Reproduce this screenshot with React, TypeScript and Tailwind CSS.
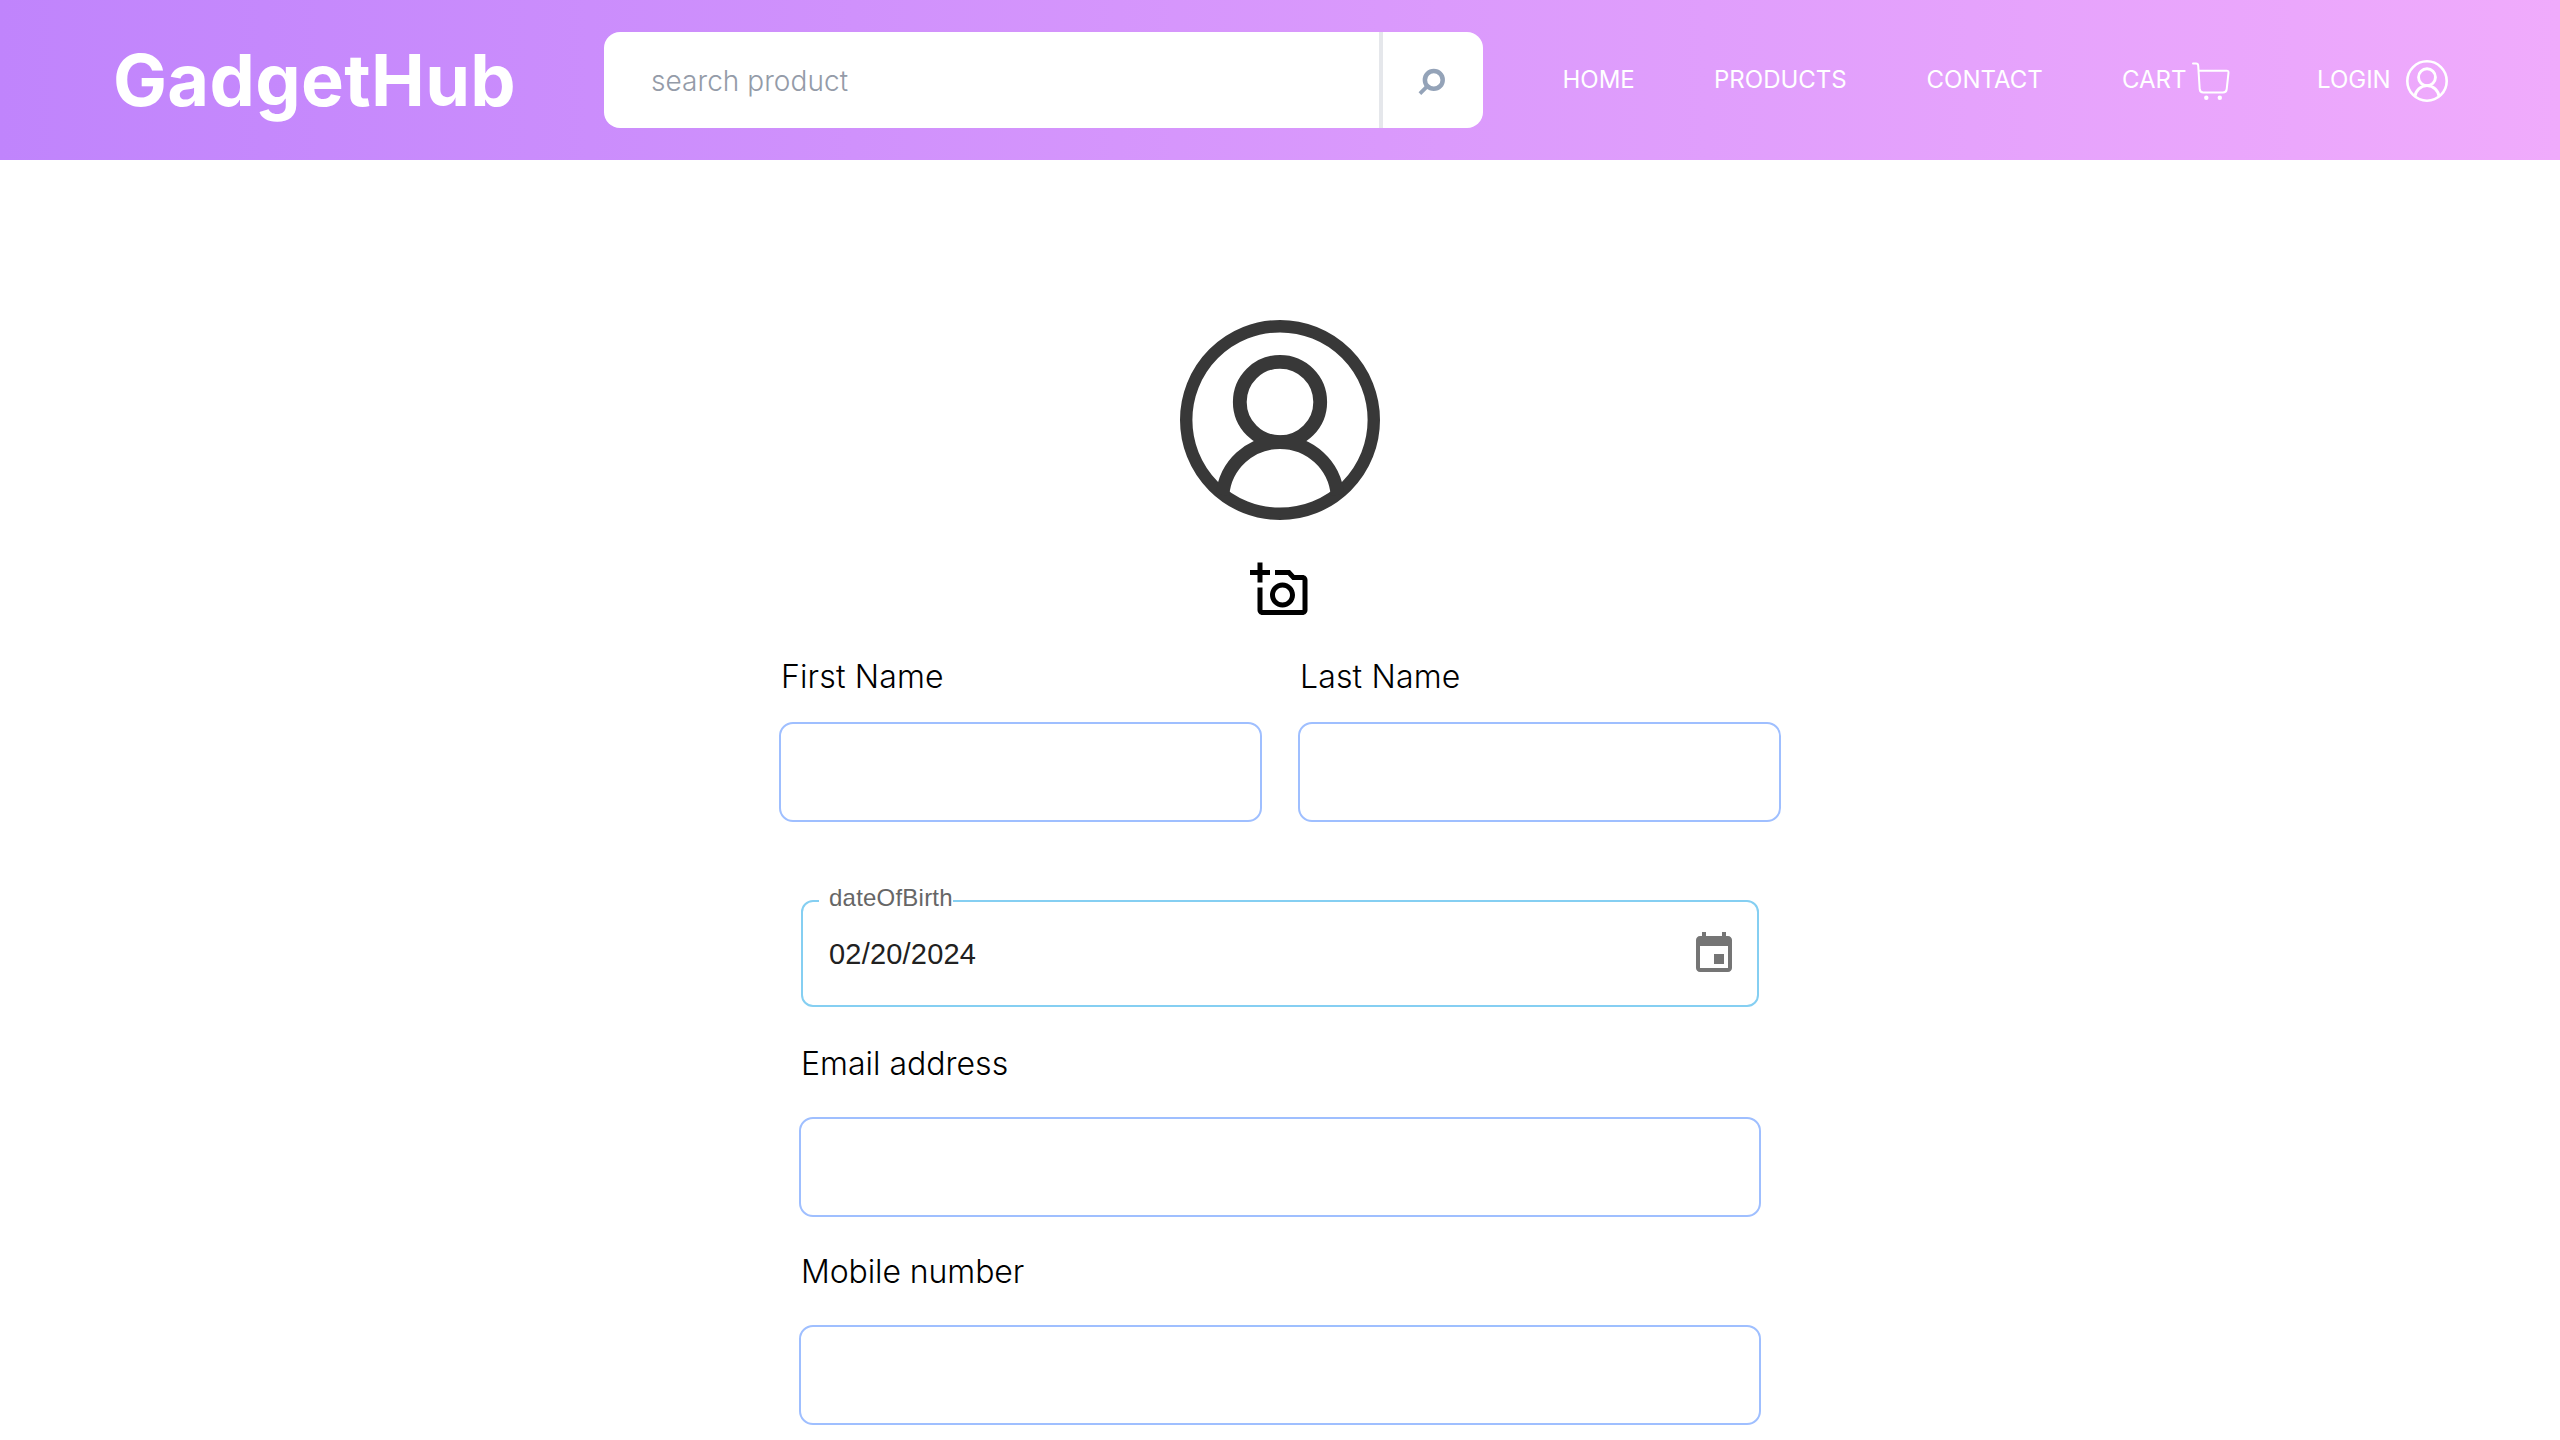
const NAV_LINK = "text-2xl leading-8 whitespace-nowrap text-white";
const FIELD = "block h-[100px] w-full rounded-[14px] border-2 border-[#9fbfff] bg-white px-6 text-3xl outline-none";
const LABEL = "block text-[32px] leading-[48px] font-light text-black whitespace-nowrap";

function SearchIcon() {
  return (
    <svg viewBox="0 0 32 32" className="size-8" fill="none" stroke="#94a3b8" strokeWidth="4.5">
      <circle cx="16.8" cy="15.9" r="8.9" />
      <path d="M10.4 22.2 L2.9 29.6" strokeWidth="3.8" />
    </svg>
  );
}

function CartIcon() {
  return (
    <svg viewBox="0 0 38 38" className="h-[38px] w-[38px]" fill="none" stroke="white" strokeWidth="2" strokeLinecap="round" strokeLinejoin="round">
      <path d="M1 1.4 H4 Q6.1 1.4 6.2 3.6 L7.7 27.2 Q8 30.6 11.3 30.6 H31 Q34.4 30.6 34.7 27.2 L36.5 10.6 Q36.6 8.7 34.7 8.7 H6.5" />
      <circle cx="14.3" cy="35.7" r="2.2" fill="white" stroke="none" />
      <circle cx="27.8" cy="35.7" r="2.2" fill="white" stroke="none" />
    </svg>
  );
}

function UserCircle({ className }: { className: string }) {
  return (
    <svg viewBox="0 0 200 200" className={className} fill="none" stroke="currentColor">
      <circle cx="100" cy="100" r="93.8" strokeWidth="12.4" />
      <circle cx="100" cy="82" r="40.2" strokeWidth="13.8" />
      <path d="M42.6 175 A57.6 57.6 0 0 1 157.4 175" strokeWidth="13.4" />
    </svg>
  );
}

function AddPhotoIcon() {
  return (
    <svg viewBox="0 0 24 24" className="size-[60px]" fill="black">
      <path d="M21 6h-3.17L16 4h-6v2h5.12l1.83 2H21v12H5v-9H3v9c0 1.1.9 2 2 2h16c1.1 0 2-.9 2-2V8c0-1.1-.9-2-2-2zM8 14c0 2.76 2.24 5 5 5s5-2.24 5-5-2.24-5-5-5-5 2.24-5 5zm5-3c1.65 0 3 1.35 3 3s-1.35 3-3 3-3-1.35-3-3 1.35-3 3-3zM5 6h3V4H5V1H3v3H0v2h3v3h2z" />
    </svg>
  );
}

function CalendarIcon() {
  return (
    <svg viewBox="0 0 24 24" className="size-12" fill="#757575">
      <path d="M17 12h-5v5h5v-5zM16 1v2H8V1H6v2H5c-1.11 0-1.99.9-1.99 2L3 19c0 1.1.89 2 2 2h14c1.1 0 2-.9 2-2V5c0-1.1-.9-2-2-2h-1V1h-2zm3 18H5V8h14v11z" />
    </svg>
  );
}

function Header() {
  return (
    <header className="flex h-40 items-center bg-linear-to-r/srgb from-[#c084fc] to-[#f0abfc] pl-28">
      <h1 className="w-[492px] pl-px text-[72px] leading-[80px] font-bold tracking-[0.32px] text-white">GadgetHub</h1>
      <div className="flex h-24 w-[879px] shrink-0 overflow-hidden rounded-2xl bg-white">
        <input
          type="text"
          placeholder="search product"
          className="min-w-0 flex-1 pt-0.5 pl-[47px] text-[28px] font-light tracking-[0.05px] outline-none placeholder:text-[#949ba8]"
        />
        <button className="flex w-[104px] items-center justify-center border-l-4 border-gray-200">
          <SearchIcon />
        </button>
      </div>
      <nav className="ml-[79.5px] flex items-center">
        <a className={`${NAV_LINK} w-[151.5px]`}>HOME</a>
        <a className={`${NAV_LINK} w-[212.5px]`}>PRODUCTS</a>
        <a className={`${NAV_LINK} w-[195.5px]`}>CONTACT</a>
        <a className={`${NAV_LINK} flex w-[195px] items-center`}>
          <span className="w-[70px]">CART</span>
          <span className="mt-0.5">
            <CartIcon />
          </span>
        </a>
        <a className={`${NAV_LINK} flex items-center`}>
          <span className="w-[89px]">LOGIN</span>
          <UserCircle className="mt-0.5 size-[42px] text-white" />
        </a>
      </nav>
    </header>
  );
}

export default function App() {
  return (
    <div className="h-[1440px] w-[2560px] overflow-hidden bg-white font-['Inter',sans-serif]">
      <Header />
      <main className="flex flex-col items-center pt-40">
        <UserCircle className="size-[200px] text-[#383838]" />
        <div className="mt-10">
          <AddPhotoIcon />
        </div>
        <form className="flex w-[1002px] flex-col items-center">
          <div className="mt-[33px] flex w-full gap-9">
            <div className="w-[483px]">
              <label className={`${LABEL} pl-0.5 tracking-[0.15px]`}>First Name</label>
              <input className={`${FIELD} mt-[21px]`} />
            </div>
            <div className="w-[483px]">
              <label className={`${LABEL} pl-0.5 tracking-[0.15px]`}>Last Name</label>
              <input className={`${FIELD} mt-[21px]`} />
            </div>
          </div>
          <div className="relative mt-[78px] flex h-[107px] w-[958px] items-center justify-between rounded-xl border-2 border-[#85cff2] pr-[19px] pl-[26px] font-['Liberation_Sans',sans-serif]">
            <span className="absolute -top-[18px] left-4 bg-white pl-2.5 text-2xl leading-7 tracking-[0.22px] text-[#666666]">
              dateOfBirth
            </span>
            <span className="pt-px text-[29px] leading-10 tracking-[0.2px] text-[#212121]">02/20/2024</span>
            <CalendarIcon />
          </div>
          <div className="mt-[33px] w-[962px]">
            <label className={`${LABEL} pl-0.5`}>Email address</label>
            <input className={`${FIELD} mt-[29px]`} />
          </div>
          <div className="mt-[31px] w-[962px]">
            <label className={`${LABEL} pl-0.5 tracking-[-0.1px]`}>Mobile number</label>
            <input className={`${FIELD} mt-[29px]`} />
          </div>
        </form>
      </main>
    </div>
  );
}
